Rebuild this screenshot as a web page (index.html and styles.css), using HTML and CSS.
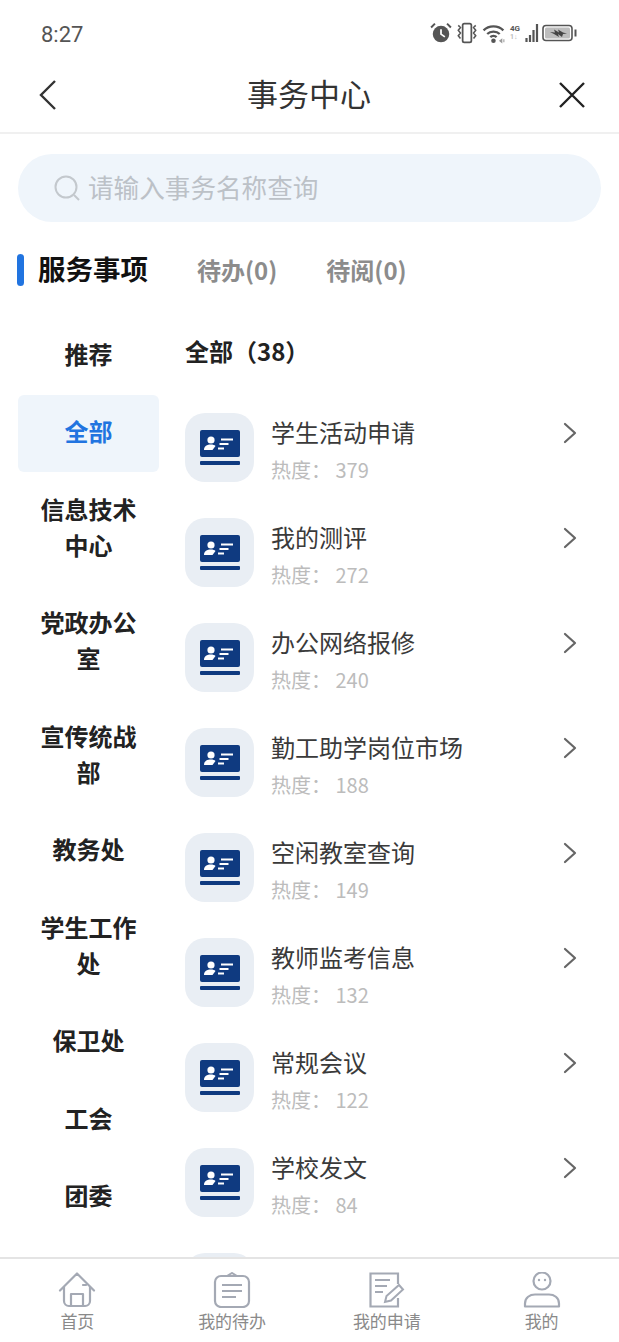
FILE: index.html
```html
<!DOCTYPE html>
<html lang="zh-CN">
<head>
<meta charset="utf-8">
<title>事务中心</title>
<link rel="stylesheet" href="styles.css">
</head>
<body>
<svg class="defs" width="0" height="0" aria-hidden="true">
  <symbol id="card" viewBox="0 0 40 36">
    <rect x="0" y="0" width="40" height="27" rx="2" fill="#0f3a80"/>
    <rect x="0" y="31" width="40" height="4" rx="1" fill="#0f3a80"/>
    <circle cx="11" cy="10" r="3.600" fill="#fff"/>
    <path d="M4 20c0-4 3-5.500 7-5.500 2 0 3.500.5 4.500 1.500l-3 4z" fill="#fff"/>
    <path d="M21 9.500h12M19.500 14h9M18 18.500h6" stroke="#fff" stroke-width="2.200" fill="none"/>
  </symbol>
  <symbol id="chev" viewBox="0 0 16 22">
    <path d="M3 2l10 9-10 9" fill="none" stroke="#666" stroke-width="2.200" stroke-linecap="round" stroke-linejoin="round"/>
  </symbol>
</svg>
<div class="app">
  <div class="status">
    <span class="time">8:27</span>
    <div class="status-icons">
      <svg width="22" height="22" viewBox="0 0 20 20"><circle cx="10" cy="11" r="7.500" fill="#555"/><path d="M10 6.500V11l3.500 2.500" stroke="#fff" stroke-width="1.600" fill="none"/><path d="M1 5l3.500-3.500M19 5l-3.500-3.500" stroke="#555" stroke-width="1.800"/></svg>
      <svg width="24" height="22" viewBox="0 0 22 20"><rect x="7" y="1.500" width="8" height="17" rx="1.500" fill="none" stroke="#555" stroke-width="1.600"/><path d="M3 3l2 2-2 2.500 2 2.500-2 2.500 2 2.500M19 3l-2 2 2 2.500-2 2.500 2 2.500-2 2.500" fill="none" stroke="#555" stroke-width="1.400"/></svg>
      <svg width="25" height="21" viewBox="0 0 24 20"><path d="M1.500 7c5-5 14-5 19 0M5 10.500c3-3 9-3 12 0M8 13.500c1.500-1.500 4.500-1.500 6 0" fill="none" stroke="#555" stroke-width="2.200"/><circle cx="11" cy="17" r="2.200" fill="#555"/><path d="M17 17l2-1.500v3zM21 15.500v3" stroke="#999" fill="#999"/></svg>
      <div class="net"><span class="net-label">4G</span><span class="net-sub">1↓</span></div>
      <svg class="bars" width="14" height="20" viewBox="0 0 14 20"><path d="M1.500 15v4M5 12v7M8.500 7v12M12 1v18" stroke="#555" stroke-width="2.200"/></svg>
      <svg width="36" height="20" viewBox="0 0 36 20"><rect x="1" y="2.500" width="29" height="15" rx="3" fill="#fff" stroke="#555" stroke-width="1.600"/><rect x="3" y="4.500" width="25" height="11" rx="1.500" fill="#bdbdbd"/><path d="M8 9l5 .5-1-3 5 3-1-3 5 3 4 1-4 .5-1 3-4-3 1 3-5-3z" fill="#444"/><path d="M33.500 6.500v7" stroke="#555" stroke-width="2"/></svg>
    </div>
  </div>
  <header class="nav">
    <svg width="20" height="32" viewBox="0 0 20 32"><path d="M17 2L3 16l14 14" fill="none" stroke="#333" stroke-width="2.400"/></svg>
    <h1 class="title">事务中心</h1>
    <svg width="28" height="28" viewBox="0 0 28 28"><path d="M2 2l24 24M26 2L2 26" fill="none" stroke="#222" stroke-width="2.400"/></svg>
  </header>
  <div class="search">
    <svg width="28" height="28" viewBox="0 0 28 28"><circle cx="13" cy="13" r="10.500" fill="none" stroke="#c3c8cd" stroke-width="2"/><path d="M21 21l5 5" stroke="#c3c8cd" stroke-width="2"/></svg>
    <span class="search-text">请输入事务名称查询</span>
  </div>
  <div class="tabs">
    <span class="tab-mark"></span>
    <span class="tab-active">服务事项</span>
    <span class="tab">待办(0)</span>
    <span class="tab">待阅(0)</span>
  </div>
  <main class="content">
    <nav class="side">
      <div class="side-item">推荐</div>
      <div class="side-item is-on">全部</div>
      <div class="side-item">信息技术中心</div>
      <div class="side-item">党政办公室</div>
      <div class="side-item">宣传统战部</div>
      <div class="side-item">教务处</div>
      <div class="side-item">学生工作处</div>
      <div class="side-item">保卫处</div>
      <div class="side-item">工会</div>
      <div class="side-item">团委</div>
    </nav>
    <section class="list">
      <h2 class="list-title">全部（38）</h2>
      <div class="row"><div class="tile"><svg width="40" height="36"><use href="#card"/></svg></div><div class="info"><div class="name">学生活动申请</div><div class="heat">热度： 379</div></div><svg class="chev" width="16" height="22"><use href="#chev"/></svg></div>
      <div class="row"><div class="tile"><svg width="40" height="36"><use href="#card"/></svg></div><div class="info"><div class="name">我的测评</div><div class="heat">热度： 272</div></div><svg class="chev" width="16" height="22"><use href="#chev"/></svg></div>
      <div class="row"><div class="tile"><svg width="40" height="36"><use href="#card"/></svg></div><div class="info"><div class="name">办公网络报修</div><div class="heat">热度： 240</div></div><svg class="chev" width="16" height="22"><use href="#chev"/></svg></div>
      <div class="row"><div class="tile"><svg width="40" height="36"><use href="#card"/></svg></div><div class="info"><div class="name">勤工助学岗位市场</div><div class="heat">热度： 188</div></div><svg class="chev" width="16" height="22"><use href="#chev"/></svg></div>
      <div class="row"><div class="tile"><svg width="40" height="36"><use href="#card"/></svg></div><div class="info"><div class="name">空闲教室查询</div><div class="heat">热度： 149</div></div><svg class="chev" width="16" height="22"><use href="#chev"/></svg></div>
      <div class="row"><div class="tile"><svg width="40" height="36"><use href="#card"/></svg></div><div class="info"><div class="name">教师监考信息</div><div class="heat">热度： 132</div></div><svg class="chev" width="16" height="22"><use href="#chev"/></svg></div>
      <div class="row"><div class="tile"><svg width="40" height="36"><use href="#card"/></svg></div><div class="info"><div class="name">常规会议</div><div class="heat">热度： 122</div></div><svg class="chev" width="16" height="22"><use href="#chev"/></svg></div>
      <div class="row"><div class="tile"><svg width="40" height="36"><use href="#card"/></svg></div><div class="info"><div class="name">学校发文</div><div class="heat">热度： 84</div></div><svg class="chev" width="16" height="22"><use href="#chev"/></svg></div>
      <div class="row"><div class="tile"></div></div>
    </section>
  </main>
  <footer class="foot">
    <div class="foot-item">
      <svg width="38" height="36" viewBox="0 0 38 36"><path d="M2 18.500L19 1.500l17 17M6 15v14a5 5 0 0 0 5 5h16a5 5 0 0 0 5-5V15M13 34V22h12v12M25 13h3" fill="none" stroke="#a4a9b4" stroke-width="2.200" stroke-linecap="round" stroke-linejoin="round"/></svg>
      <span>首页</span>
    </div>
    <div class="foot-item">
      <svg width="38" height="36" viewBox="0 0 38 36"><rect x="2" y="4" width="34" height="31" rx="6" fill="none" stroke="#a4a9b4" stroke-width="2.200"/><path d="M14 4l5-3 5 3M9 13h20M9 19h20M9 25h14" fill="none" stroke="#a4a9b4" stroke-width="2"/></svg>
      <span>我的待办</span>
    </div>
    <div class="foot-item">
      <svg width="38" height="36" viewBox="0 0 38 36"><path d="M30 12V1.500H2.500v33H30V26" fill="none" stroke="#a4a9b4" stroke-width="2.200"/><path d="M7 8h15M7 14h12M7 20h8" fill="none" stroke="#a4a9b4" stroke-width="2"/><path d="M17 30l1.500-6L31 13l4 4.500L23 28.500z" fill="none" stroke="#a4a9b4" stroke-width="2"/></svg>
      <span>我的申请</span>
    </div>
    <div class="foot-item">
      <svg width="38" height="36" viewBox="0 0 38 36"><circle cx="19" cy="9" r="8.500" fill="none" stroke="#a4a9b4" stroke-width="2.200"/><circle cx="16" cy="8" r="1.200" fill="#a4a9b4"/><circle cx="22" cy="8" r="1.200" fill="#a4a9b4"/><path d="M2 34.500v-3c0-6 5-9 10-9h14c5 0 10 3 10 9v3z" fill="none" stroke="#a4a9b4" stroke-width="2.200" stroke-linejoin="round"/></svg>
      <span>我的</span>
    </div>
  </footer>
</div>
</body>
</html>
```

FILE: styles.css
```css
* { box-sizing: border-box; }
html, body { margin: 0; padding: 0; background: #fff; }
body { font-family: "Noto Sans CJK SC", "Noto Sans", sans-serif; overflow: hidden; }
.defs { display: block; height: 0; }
.app { width: 619px; height: 1342px; display: flex; flex-direction: column; overflow: hidden; background: #fff; }

.status { height: 68px; flex: none; display: flex; align-items: center; justify-content: space-between; padding: 0 41px 0 41px; }
.time { font-family: Roboto, sans-serif; font-size: 22px; color: #555; }
.status-icons { display: flex; align-items: center; gap: 3px; margin-top: -2px; }
.net { display: flex; flex-direction: column; font-family: Roboto, sans-serif; font-weight: 700; line-height: 9px; width: 14px; margin-right: -2px; }
.net-label { font-size: 8px; color: #555; }
.net-sub { font-size: 7px; color: #bbb; }

.nav { height: 66px; flex: none; display: flex; align-items: center; justify-content: space-between; padding: 0 33px 10px 38px; border-bottom: 2px solid #f0f0f0; }
.title { margin: 0 0 6px 2px; font-size: 31px; font-weight: 400; color: #333; line-height: 1; }

.search { flex: none; height: 68px; margin: 20px 18px 0; border-radius: 34px; background: #eff5fb; display: flex; align-items: center; gap: 7px; padding: 0 0 0 35px; }
.search-text { font-size: 25.6px; color: #bcc1c7; line-height: 1; margin-bottom: 2px; }

.tabs { flex: none; height: 95px; display: flex; align-items: center; padding: 0 0 0 17px; }
.tab-mark { width: 7px; height: 32px; border-radius: 4px; background: #2174e0; margin-right: 14px; }
.tab-active { font-size: 27.5px; font-weight: 700; color: #111; line-height: 1; margin-right: 49px; margin-top: -2px; }
.tab { font-size: 24px; font-weight: 700; color: #8c8c8c; line-height: 1; margin-right: 49px; }

.content { flex: 1; min-height: 0; display: flex; overflow: hidden; padding-left: 18px; }
.side { width: 141px; flex: none; }
.side-item { padding: 18.750px 22px 22.750px; font-size: 24px; line-height: 36px; font-weight: 700; color: #222; text-align: center; }
.side-item.is-on { background: #eff5fb; color: #2174e0; border-radius: 6px; }

.list { flex: 1; min-width: 0; padding-left: 26px; }
.list-title { margin: 0; height: 78px; padding-top: 16px; font-size: 24px; line-height: 36px; font-weight: 700; color: #222; }
.row { height: 105px; display: flex; align-items: center; }
.tile { width: 69px; height: 69px; flex: none; border-radius: 20px; background: #e9eef4; display: flex; align-items: center; justify-content: center; }
.info { flex: 1; min-width: 0; padding-left: 17px; padding-top: 7px; }
.name { font-size: 24px; line-height: 36px; color: #3a3a3a; }
.heat { font-size: 20px; line-height: 36px; margin-top: 2px; color: #bcbcbc; }
.chev { flex: none; margin: 0 41px 30px 0; }

.foot { flex: none; height: 85px; background: #fff; border-top: 2px solid #e4e4e4; display: flex; position: relative; padding-top: 13px; }
.foot-item { flex: 1; display: flex; flex-direction: column; align-items: center; }
.foot-item span { font-size: 17px; line-height: 24px; color: #8a8a8a; margin-top: 1px; }
```
